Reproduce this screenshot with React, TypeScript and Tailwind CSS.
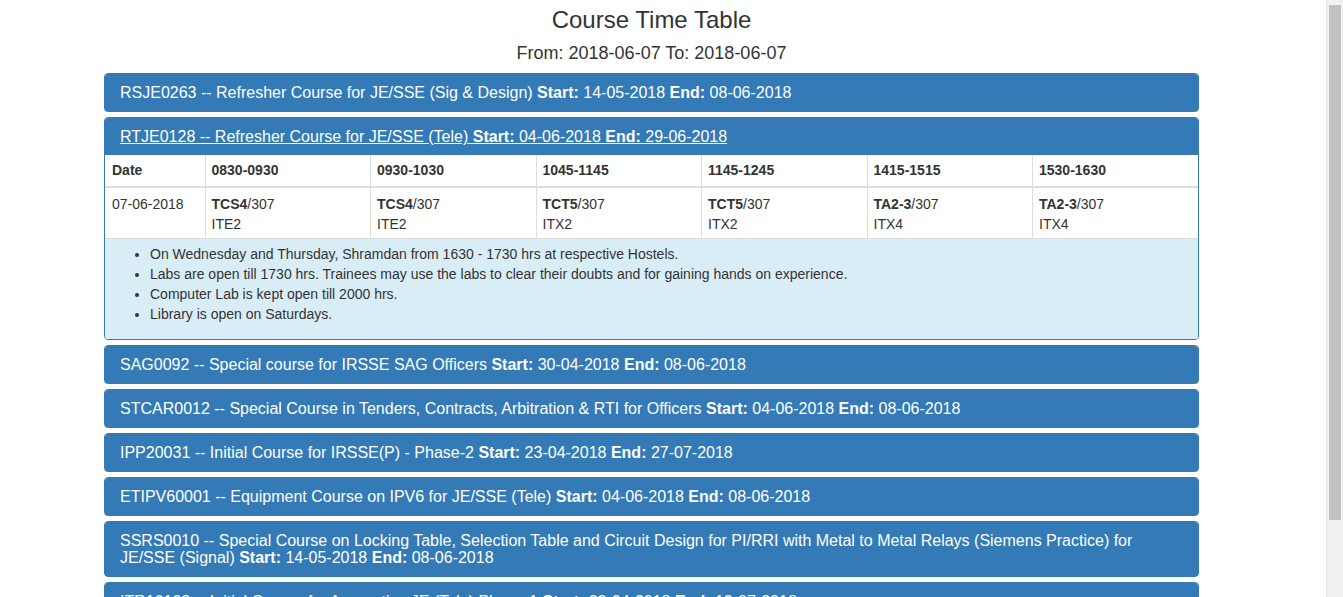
import React from "react";

type Course = { code: string; title: string; start: string; end: string; open?: boolean };

const COURSES: Course[] = [
  { code: "RSJE0263", title: "Refresher Course for JE/SSE (Sig & Design)", start: "14-05-2018", end: "08-06-2018" },
  { code: "RTJE0128", title: "Refresher Course for JE/SSE (Tele)", start: "04-06-2018", end: "29-06-2018", open: true },
  { code: "SAG0092", title: "Special course for IRSSE SAG Officers", start: "30-04-2018", end: "08-06-2018" },
  { code: "STCAR0012", title: "Special Course in Tenders, Contracts, Arbitration & RTI for Officers", start: "04-06-2018", end: "08-06-2018" },
  { code: "IPP20031", title: "Initial Course for IRSSE(P) - Phase-2", start: "23-04-2018", end: "27-07-2018" },
  { code: "ETIPV60001", title: "Equipment Course on IPV6 for JE/SSE (Tele)", start: "04-06-2018", end: "08-06-2018" },
  {
    code: "SSRS0010",
    title: "Special Course on Locking Table, Selection Table and Circuit Design for PI/RRI with Metal to Metal Relays (Siemens Practice) for JE/SSE (Signal)",
    start: "14-05-2018",
    end: "08-06-2018",
  },
  { code: "ITR10102", title: "Initial Course for Apprentice JE (Tele) Phase-1", start: "23-04-2018", end: "13-07-2018" },
];

const SLOTS = ["0830-0930", "0930-1030", "1045-1145", "1145-1245", "1415-1515", "1530-1630"];

const ROW = [
  { subj: "TCS4", room: "307", fac: "ITE2" },
  { subj: "TCS4", room: "307", fac: "ITE2" },
  { subj: "TCT5", room: "307", fac: "ITX2" },
  { subj: "TCT5", room: "307", fac: "ITX2" },
  { subj: "TA2-3", room: "307", fac: "ITX4" },
  { subj: "TA2-3", room: "307", fac: "ITX4" },
];

const NOTES = [
  "On Wednesday and Thursday, Shramdan from 1630 - 1730 hrs at respective Hostels.",
  "Labs are open till 1730 hrs. Trainees may use the labs to clear their doubts and for gaining hands on experience.",
  "Computer Lab is kept open till 2000 hrs.",
  "Library is open on Saturdays.",
];

function Heading({ c }: { c: Course }) {
  return (
    <div className="bg-[#337ab7] text-white px-[15px] py-[10px] rounded-t-[3px]">
      <p className="text-[16px] leading-[17px]">
        <span className={c.open ? "underline" : ""}>
          {c.code} -- {c.title} <b>Start:</b> {c.start} <b>End:</b> {c.end}
        </span>
      </p>
    </div>
  );
}

function TimeTable() {
  return (
    <table className="w-full table-fixed border-collapse text-[14px] leading-[20px] text-[#333]">
      <colgroup>
        <col className="w-[100px]" />
        {SLOTS.map((s) => (
          <col key={s} />
        ))}
      </colgroup>
      <thead>
        <tr>
          <th className="text-left font-bold pt-[5px] pb-[6px] pl-[7px] pr-[5px] border-b-2 border-[#ddd]">Date</th>
          {SLOTS.map((s) => (
            <th key={s} className="text-left font-bold pt-[5px] pb-[6px] pl-[6px] pr-[5px] border-b-2 border-l border-[#ddd]">
              {s}
            </th>
          ))}
        </tr>
      </thead>
      <tbody>
        <tr>
          <td className="align-top pt-[6px] pb-[4px] pl-[7px] pr-[5px]">07-06-2018</td>
          {ROW.map((r, i) => (
            <td key={i} className="align-top pt-[6px] pb-[4px] pl-[6px] pr-[5px] border-l border-[#ddd]">
              <b>{r.subj}</b>/{r.room}
              <br />
              {r.fac}
            </td>
          ))}
        </tr>
      </tbody>
    </table>
  );
}

export default function App() {
  return (
    <div className="h-[597px] overflow-hidden flex bg-white font-['Liberation_Sans',Arial,sans-serif] text-[#333]">
      <div className="flex-1">
        <div className="w-[1095px] ml-[104px]">
          <h3 className="text-center text-[24px] leading-[1.1] mt-[7px]">Course Time Table</h3>
          <h4 className="text-center text-[18px] leading-[1.1] mt-[11px] mb-[9px]">From: 2018-06-07 To: 2018-06-07</h4>

          <div className="flex flex-col gap-[5px]">
            {COURSES.map((c) => (
              <div key={c.code} className="border border-[#337ab7] rounded-[4px] bg-white">
                <Heading c={c} />
                {c.open && (
                  <>
                    <TimeTable />
                    <div className="bg-[#d9edf7] border-t border-[#ddd] p-[5px] rounded-b-[3px] text-[14px] leading-[20px]">
                      <ul className="list-disc pl-[40px] mb-[10px]">
                        {NOTES.map((n) => (
                          <li key={n}>{n}</li>
                        ))}
                      </ul>
                    </div>
                  </>
                )}
              </div>
            ))}
          </div>
        </div>
      </div>
      <div className="w-[17px] bg-[#f1f1f1] border-l border-[#e8e8e8] pt-[5px] px-[2px]">
        <div className="h-[515px] bg-[#c1c1c1]" />
      </div>
    </div>
  );
}
